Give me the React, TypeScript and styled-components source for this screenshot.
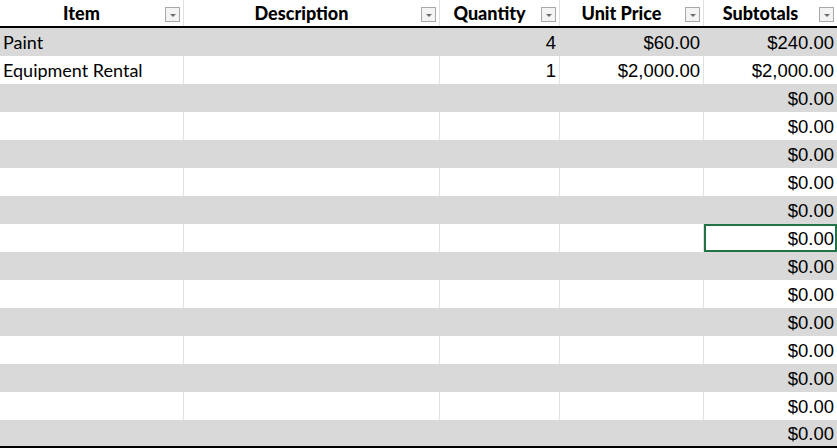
import React from "react";
import styled, { createGlobalStyle } from "styled-components";

const Global = createGlobalStyle`
  html, body { margin: 0; padding: 0; background: #fff; overflow: hidden; }
`;

const COLS = "184px 256px 120px 144px 133px";

const Table = styled.div`
  width: 837px;
  display: flex;
  flex-direction: column;
  font-family: "Lato", "Open Sans", sans-serif;
  color: #000;
`;

const HeaderRow = styled.div`
  display: grid;
  grid-template-columns: ${COLS};
  height: 26px;
  border-bottom: 2px solid #000;
`;

const HeadCell = styled.div`
  position: relative;
  display: flex;
  align-items: center;
  justify-content: center;
  font-weight: 900;
  font-size: 18px;
  padding-right: 20px;
  box-sizing: border-box;
  border-right: 1px solid #e1e1e1;
  &:last-child { border-right: none; }
`;

const Drop = styled.span`
  position: absolute;
  right: 3px;
  top: 7px;
  width: 15px;
  height: 15px;
  box-sizing: border-box;
  border: 1px solid #a8a8a8;
  background: #f3f3f3;
  &::after {
    content: "";
    position: absolute;
    left: 4px;
    top: 6px;
    border-left: 3px solid transparent;
    border-right: 3px solid transparent;
    border-top: 3px solid #707070;
  }
`;

const Row = styled.div<{ $shade: boolean }>`
  display: grid;
  grid-template-columns: ${COLS};
  height: 28px;
  background: ${(p) => (p.$shade ? "#d9d9d9" : "#fff")};
  &:last-child { height: 26px; border-bottom: 2px solid #000; }
`;

const Cell = styled.div<{ $num?: boolean; $sel?: boolean; $shade: boolean }>`
  position: relative;
  display: flex;
  align-items: center;
  justify-content: ${(p) => (p.$num ? "flex-end" : "flex-start")};
  padding: ${(p) => (p.$num ? "2px 3px 0 0" : "0 0 0 3px")};
  box-sizing: border-box;
  font-family: ${(p) => (p.$num ? '"Liberation Sans", Arial, sans-serif' : '"Lato", sans-serif')};
  font-size: ${(p) => (p.$num ? "18.5px" : "18px")};
  border-right: 1px solid ${(p) => (p.$shade ? "#d9d9d9" : "#e1e1e1")};
  &:last-child { border-right: none; }
  ${(p) => p.$sel && `outline: 2px solid #217346; outline-offset: -2px;`}
`;

const rows = [
  ["Paint", "", "4", "$60.00", "$240.00"],
  ["Equipment Rental", "", "1", "$2,000.00", "$2,000.00"],
  ...Array.from({ length: 13 }, () => ["", "", "", "", "$0.00"]),
];

const heads = ["Item", "Description", "Quantity", "Unit Price", "Subtotals"];

export default function App() {
  return (
    <Table>
      <Global />
      <HeaderRow>
        {heads.map((h) => (
          <HeadCell key={h}>
            {h}
            <Drop />
          </HeadCell>
        ))}
      </HeaderRow>
      {rows.map((r, i) => {
        const shade = i % 2 === 0;
        return (
          <Row key={i} $shade={shade}>
            {r.map((v, j) => (
              <Cell key={j} $shade={shade} $num={j >= 2} $sel={i === 7 && j === 4}>
                {v}
              </Cell>
            ))}
          </Row>
        );
      })}
    </Table>
  );
}
